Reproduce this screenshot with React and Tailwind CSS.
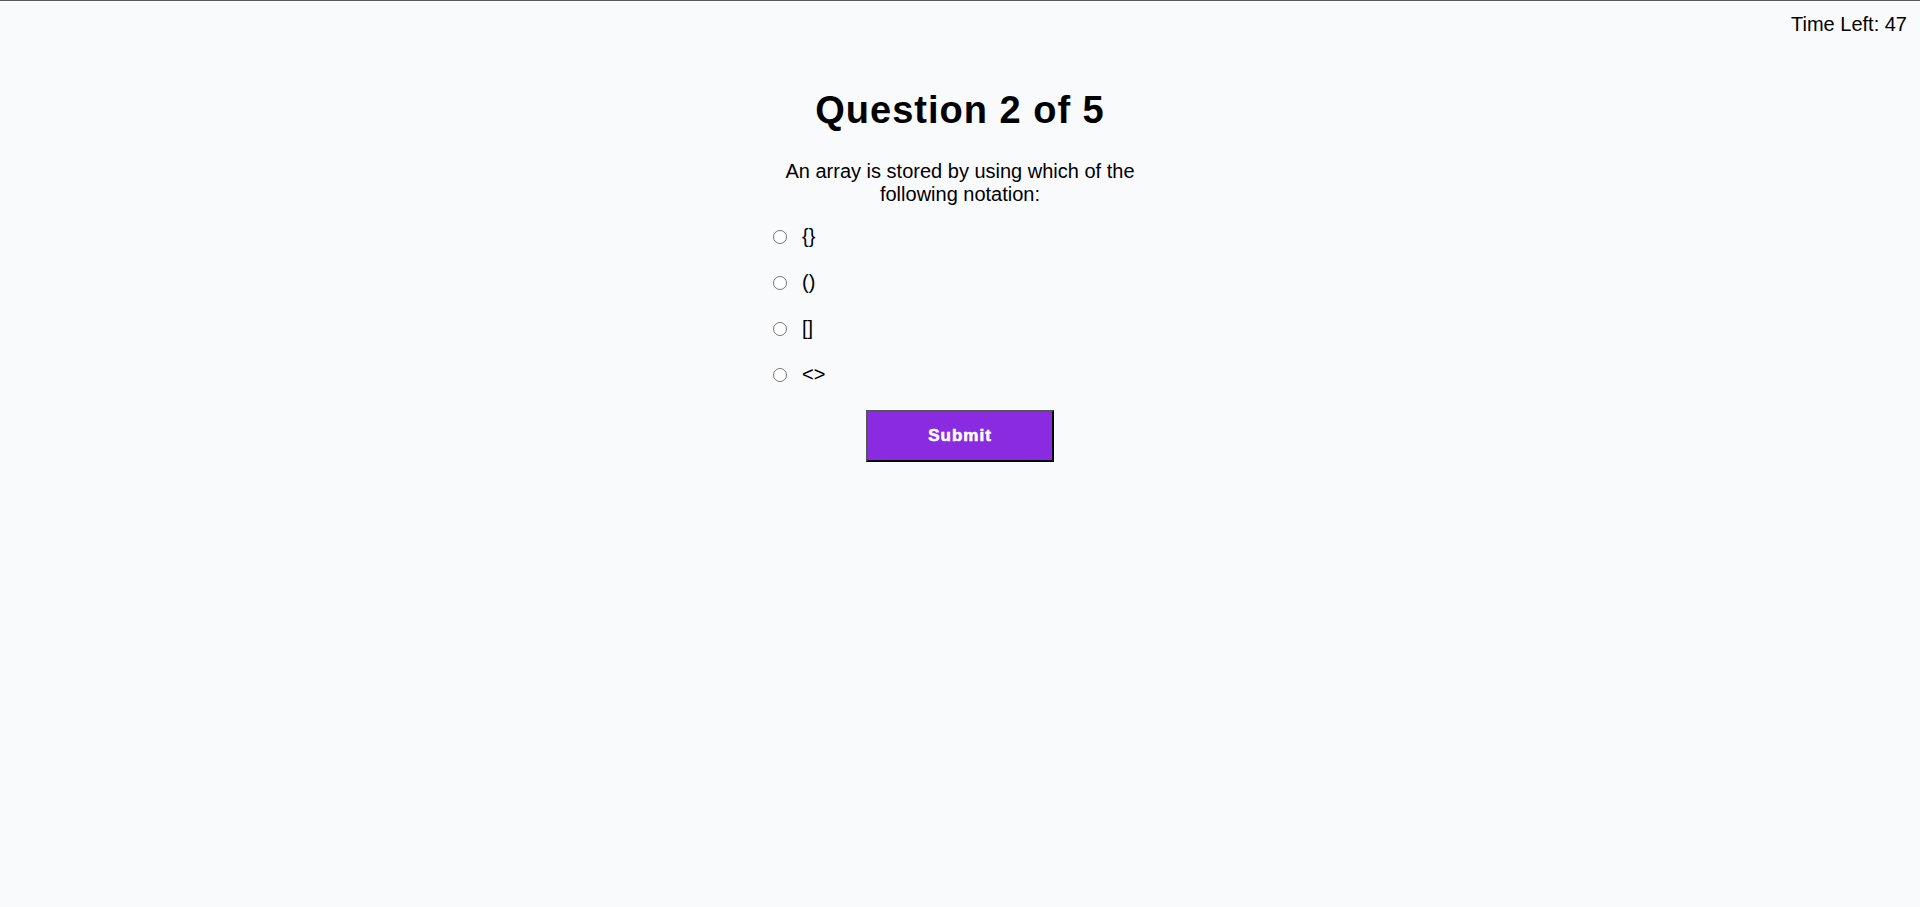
const OPTIONS = ["{}", "()", "[]", "<>"];

export default function App() {
  return (
    <div className="min-h-[907px] bg-[#f8fafc] border-t border-[#5a5a5a] text-black font-['Liberation_Sans',Arial,sans-serif]">
      {/* Timer */}
      <div className="pt-3 pr-[13px] text-right text-[20px] leading-[23px]">
        Time Left: 47
      </div>

      {/* Quiz */}
      <div className="mx-auto w-[380px] flex flex-col">
        <h1 className="mt-[53px] text-center text-[38px] leading-[43px] font-bold tracking-[1px]">
          Question 2 of 5
        </h1>

        <p className="mt-[28px] text-center text-[20px] leading-[23px]">
          An array is stored by using which of the following notation:
        </p>

        <div className="mt-[19px] flex flex-col gap-[23px] pl-[3px]">
          {OPTIONS.map((opt) => (
            <label key={opt} className="flex items-center h-[23px] text-[20px] leading-[23px] cursor-pointer">
              <input
                type="radio"
                name="answer"
                className="appearance-none w-[14px] h-[14px] m-0 rounded-full border border-[#767676] bg-white checked:border-[4px] checked:border-[#0075ff]"
              />
              <span className="ml-[15px]">{opt}</span>
            </label>
          ))}
        </div>

        <button className="mt-[24px] self-center w-[188px] h-[52px] bg-[#8a2be2] text-white text-[17px] font-bold tracking-[1px] [-webkit-text-stroke:0.6px_white] border-2 border-t-[#555] border-l-[#555] border-r-black border-b-black">
          Submit
        </button>
      </div>
    </div>
  );
}
